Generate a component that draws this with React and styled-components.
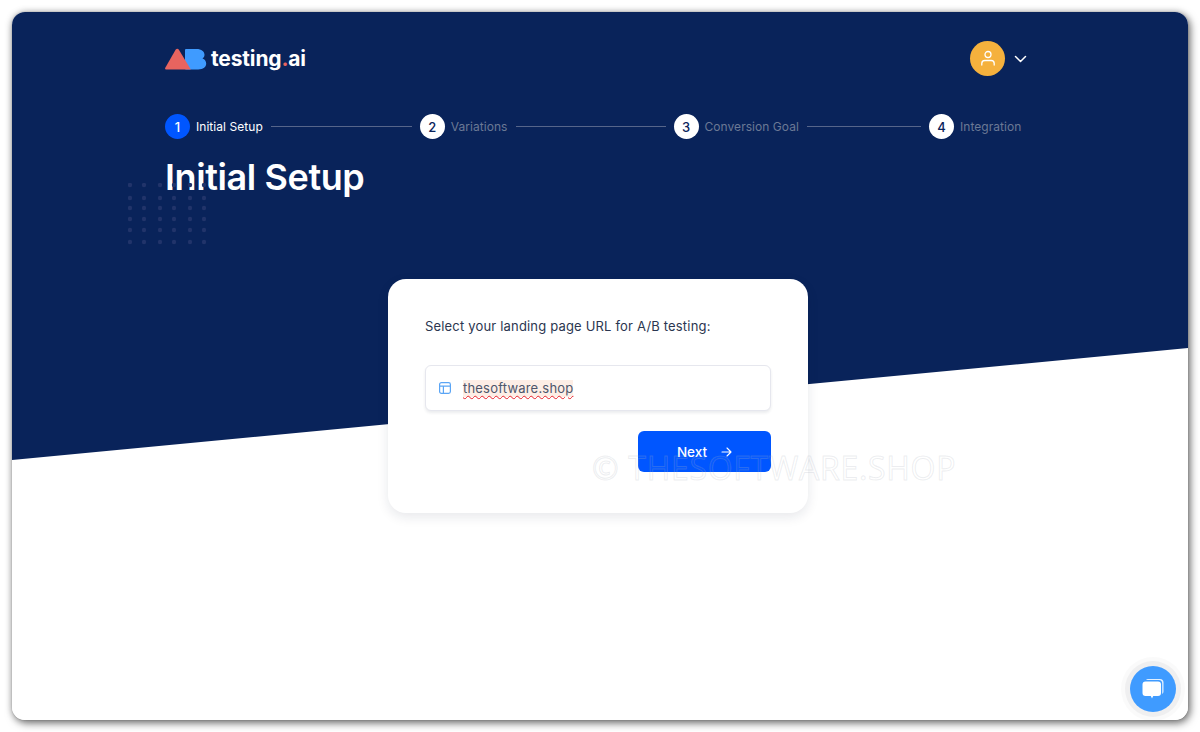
import React from "react";
import styled, { createGlobalStyle } from "styled-components";

const GlobalStyle = createGlobalStyle`
  html, body {
    margin: 0;
    height: 100%;
    background: #fff;
    font-family: Inter, "Liberation Sans", sans-serif;
  }
  * { box-sizing: border-box; }
`;

const Page = styled.div`
  padding: 12px;
  height: 732px;
  overflow: hidden;
`;

const Window = styled.div`
  position: relative;
  height: 708px;
  padding-right: 4px;
  border-radius: 13px;
  background: #fff;
  overflow: hidden;
  box-shadow: 0 0 0 1px rgba(0, 0, 0, 0.04);
  display: flex;
  flex-direction: column;
  align-items: center;

  &::before {
    content: "";
    position: absolute;
    inset: 0 0 auto 0;
    height: 448px;
    background: #09235a;
    clip-path: polygon(0 0, 100% 0, 100% 336px, 0 100%);
  }
`;

const WindowShadow = styled.div`
  border-radius: 13px;
  box-shadow: 2px 3px 9px rgba(0, 0, 0, 0.55), 0 0 7px rgba(0, 0, 0, 0.18);
`;

const Container = styled.div`
  position: relative;
  width: 862px;
  margin-left: -4px;
  display: flex;
  flex-direction: column;
`;

const Header = styled.header`
  height: 35px;
  margin-top: 29px;
  display: flex;
  align-items: center;
  justify-content: space-between;
`;

const Logo = styled.div`
  display: flex;
  align-items: center;
  gap: 4px;
`;

const LogoText = styled.span`
  color: #fff;
  font-size: 21px;
  font-weight: 700;
  letter-spacing: -0.15px;
  line-height: 24px;

  em {
    color: #e8645f;
    font-style: normal;
  }
`;

const UserMenu = styled.div`
  display: flex;
  align-items: center;
  gap: 9px;
`;

const Avatar = styled.div`
  width: 35px;
  height: 35px;
  border-radius: 50%;
  background: #f5b13d;
  display: flex;
  align-items: center;
  justify-content: center;
`;

const Stepper = styled.ol`
  list-style: none;
  margin: 38px 0 0;
  padding: 0;
  height: 25px;
  display: flex;
  align-items: center;
`;

const StepCircle = styled.span`
  width: 25px;
  height: 25px;
  flex: none;
  border-radius: 50%;
  margin-right: 6px;
  background: ${(p) => (p.$active ? "#0056ff" : "#fff")};
  color: ${(p) => (p.$active ? "#fff" : "#09235a")};
  font-size: 13px;
  font-weight: 500;
  display: flex;
  align-items: center;
  justify-content: center;
`;

const StepLabel = styled.span`
  font-size: 12px;
  letter-spacing: 0.05px;
  white-space: nowrap;
  color: ${(p) => (p.$active ? "#fff" : "#6b7995")};
`;

const StepItem = styled.li`
  display: flex;
  align-items: center;
`;

const StepLine = styled.span`
  display: block;
  height: 1px;
  flex: none;
  width: ${(p) => p.$width}px;
  margin: 0 8px;
  background: #56658a;
`;

const Title = styled.h1`
  margin: 12px 0 0;
  color: #fff;
  font-size: 36px;
  font-weight: 600;
  letter-spacing: -0.4px;
  line-height: 52px;
`;

const Dots = styled.svg`
  position: absolute;
  left: -37px;
  top: 171px;
`;

const Card = styled.section`
  position: relative;
  width: 420px;
  height: 234px;
  margin-top: 76px;
  padding: 37px 37px 0;
  background: #fff;
  border-radius: 18px;
  box-shadow: 0 4px 12px rgba(20, 30, 60, 0.1);
  display: flex;
  flex-direction: column;
`;

const FieldLabel = styled.label`
  color: #2b3650;
  font-size: 13px;
  line-height: 20px;
  letter-spacing: 0.18px;
`;

const UrlField = styled.div`
  height: 46px;
  margin-top: 29px;
  padding: 0 13px;
  border: 1px solid #e6e7ee;
  border-radius: 6px;
  background: #fff;
  box-shadow: 0 2px 3px rgba(30, 40, 70, 0.09);
  display: flex;
  align-items: center;
  gap: 12px;
`;

const UrlText = styled.span`
  color: #4d566b;
  font-size: 13px;
  line-height: 17px;
  letter-spacing: 0.2px;
  background: #fdeee6;
  text-decoration: underline wavy #e8202a 1px;
  text-underline-offset: 2px;
`;

const Actions = styled.div`
  margin-top: 20px;
  display: flex;
  justify-content: flex-end;
`;

const NextButton = styled.button`
  width: 133px;
  height: 41px;
  border: 0;
  border-radius: 6px;
  background: #0056ff;
  color: #fff;
  font-family: inherit;
  font-size: 13.5px;
  font-weight: 500;
  display: flex;
  align-items: center;
  justify-content: center;
  gap: 14px;
`;

const Watermark = styled.div`
  position: absolute;
  left: 580px;
  top: 439px;
  color: rgba(255, 255, 255, 0.05);
  -webkit-text-stroke: 1px rgba(170, 175, 190, 0.22);
  font-family: "Open Sans", sans-serif;
  font-size: 32px;
  line-height: 34px;
  letter-spacing: 0.7px;
  white-space: nowrap;
  pointer-events: none;
`;

const ChatButton = styled.div`
  position: absolute;
  right: 12px;
  bottom: 8px;
  width: 46px;
  height: 46px;
  border-radius: 50%;
  background: #3f9bff;
  box-shadow: 0 0 0 5px rgba(120, 120, 130, 0.08), 0 0 0 9px rgba(120, 120, 130, 0.04);
  display: flex;
  align-items: center;
  justify-content: center;
`;

const steps = [
  { label: "Initial Setup", line: 141, active: true },
  { label: "Variations", line: 150 },
  { label: "Conversion Goal", line: 114 },
  { label: "Integration" },
];

const dotX = [2, 16, 32, 46, 62, 76];
const dotY = [2, 15, 25, 36, 47, 59];

function App() {
  return (
    <Page>
      <GlobalStyle />
      <WindowShadow>
        <Window>
          <Container>
            <Header>
              <Logo>
                <svg width="42" height="22" viewBox="0 0 42 22">
                  <path
                    d="M21 1h10.5c5 0 8 2.6 8 5.8 0 1.700-.8 3-2 3.800 2.400.9 3.700 2.800 3.700 5 0 3.600-3 5.900-8 5.900H21a1 1 0 0 1-1-1V2a1 1 0 0 1 1-1z"
                    fill="#3f9bff"
                  />
                  <path
                    d="M10.600 1.800c.9-1.400 2.400-1.400 3.300 0l11.900 19.700H1.300c-1 0-1.500-.9-1-1.800z"
                    fill="#e8645f"
                  />
                </svg>
                <LogoText>
                  testing<em>.</em>ai
                </LogoText>
              </Logo>
              <UserMenu>
                <Avatar>
                  <svg width="16" height="17" viewBox="0 0 16 17" fill="none" stroke="#fff" strokeWidth="1.300" strokeLinecap="round">
                    <circle cx="8" cy="4.500" r="3" />
                    <path d="M1.800 15v-1.500c0-1.700 1.300-3 3-3h6.400c1.700 0 3 1.300 3 3V15" />
                  </svg>
                </Avatar>
                <svg width="13" height="8" viewBox="0 0 13 8" fill="none" stroke="#fff" strokeWidth="1.500" strokeLinecap="round" strokeLinejoin="round">
                  <path d="M1.500 1.500 6.500 6.500 11.500 1.500" />
                </svg>
              </UserMenu>
            </Header>
            <Stepper>
              {steps.map((step, i) => (
                <React.Fragment key={step.label}>
                  <StepItem>
                    <StepCircle $active={step.active}>{i + 1}</StepCircle>
                    <StepLabel $active={step.active}>{step.label}</StepLabel>
                  </StepItem>
                  {step.line && <StepLine $width={step.line} />}
                </React.Fragment>
              ))}
            </Stepper>
            <Title>Initial Setup</Title>
            <Dots width="80" height="64" viewBox="0 0 80 64">
              {dotY.map((y) =>
                dotX.map((x) => <circle key={`${x}-${y}`} cx={x} cy={y} r="2.2" fill="#21346a" />)
              )}
            </Dots>
          </Container>
          <Card>
            <FieldLabel>Select your landing page URL for A/B testing:</FieldLabel>
            <UrlField>
              <svg width="12" height="12" viewBox="0 0 12 12" fill="none" stroke="#5aa5f5" strokeWidth="1.200" style={{ flex: "none" }}>
                <rect x="0.600" y="0.600" width="10.800" height="10.800" rx="1.800" />
                <path d="M0.600 4.200H11.400M4.400 4.200V11.400" />
              </svg>
              <UrlText>thesoftware.shop</UrlText>
            </UrlField>
            <Actions>
              <NextButton>
                Next
                <svg width="11" height="10" viewBox="0 0 11 10" fill="none" stroke="#fff" strokeWidth="1.100" strokeLinecap="round" strokeLinejoin="round">
                  <path d="M1 5H10M6 1l4 4-4 4" />
                </svg>
              </NextButton>
            </Actions>
          </Card>
          <Watermark>© THESOFTWARE.SHOP</Watermark>
          <ChatButton>
            <svg width="26" height="26" viewBox="0 0 26 26">
              <path d="M8 3h12a3.500 3.500 0 0 1 3.500 3.500v9a3 3 0 0 1-1.300 2.500V7.500a3.500 3.500 0 0 0-3.500-3.500H6a3 3 0 0 1 2-1z" fill="#fff" fillOpacity="0.85" />
              <path d="M5.500 5.500h12.500a3 3 0 0 1 3 3v8.500a3 3 0 0 1-3 3h-4.800L12 22.500 10.800 20H5.500a3 3 0 0 1-3-3V8.500a3 3 0 0 1 3-3z" fill="#fff" />
            </svg>
          </ChatButton>
        </Window>
      </WindowShadow>
    </Page>
  );
}

export default App;
